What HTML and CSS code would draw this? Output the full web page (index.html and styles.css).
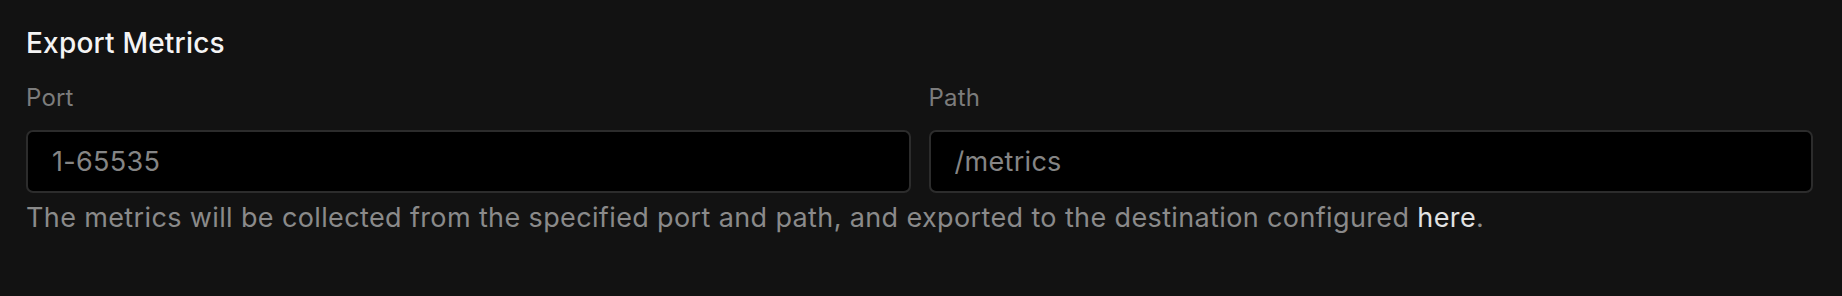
FILE: index.html
```
<!DOCTYPE html>
<html>
<head>
<meta charset="utf-8">
<link rel="stylesheet" href="styles.css">
</head>
<body>
<section class="panel">
  <h2 class="title">Export Metrics</h2>
  <div class="fields">
    <label class="field">
      <span class="label">Port</span>
      <input class="input" type="text" placeholder="1-65535">
    </label>
    <label class="field">
      <span class="label">Path</span>
      <input class="input" type="text" placeholder="/metrics">
    </label>
  </div>
  <p class="help">The metrics will be collected from the specified port and path, and exported to the destination configured <a class="link" href="#">here</a>.</p>
</section>
</body>
</html>
```

FILE: styles.css
```
html, body {
  margin: 0;
  padding: 0;
  background: #121212;
  height: 100%;
}
body {
  font-family: Inter, "Noto Sans", "Liberation Sans", sans-serif;
}
.panel {
  padding: 23px 29px 0 26px;
}
.title {
  margin: 0;
  font-size: 28px;
  line-height: 40px;
  font-weight: 500;
  letter-spacing: 0.2px;
  color: #f4f4f4;
}
.fields {
  display: grid;
  grid-template-columns: 1fr 1fr;
  column-gap: 18px;
  margin-top: 19px;
}
.field {
  display: flex;
  flex-direction: column;
  gap: 16px;
}
.label {
  font-size: 24px;
  line-height: 32px;
  letter-spacing: 0.2px;
  color: #7c7c7c;
}
.input {
  box-sizing: border-box;
  height: 63px;
  width: 100%;
  margin: 0;
  padding: 0 24px;
  background: #000;
  border: 2px solid #2c2c2c;
  border-radius: 7px;
  font-family: inherit;
  font-size: 27px;
  letter-spacing: 0.3px;
  color: #e0e0e0;
  outline: none;
}
.input::placeholder {
  color: #858585;
  opacity: 1;
}
.help {
  margin: 7px 0 0;
  font-size: 27px;
  line-height: 36px;
  letter-spacing: 0.37px;
  color: #8a8a8a;
}
.link {
  color: #e2e2e2;
  text-decoration: none;
}
```
